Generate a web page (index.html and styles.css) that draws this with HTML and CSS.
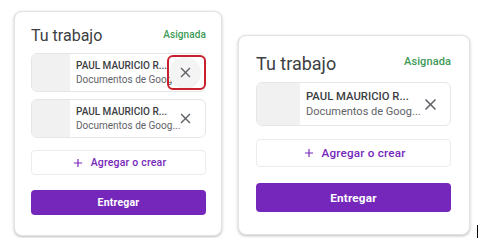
FILE: index.html
```html
<!DOCTYPE html>
<html lang="es">
<head>
<meta charset="utf-8">
<title>Tu trabajo</title>
<link rel="stylesheet" href="styles.css">
</head>
<body>
<div class="page">
  <section class="card card--sm">
    <div class="card__head">
      <h2 class="card__title">Tu trabajo</h2>
      <span class="card__status">Asignada</span>
    </div>
    <div class="att">
      <div class="att__thumb"></div>
      <div class="att__text">
        <div class="att__name">PAUL MAURICIO R...</div>
        <div class="att__type">Documentos de Goog...</div>
      </div>
      <div class="att__remove att__remove--hover">
        <svg class="att__x" viewBox="0 0 24 24"><path d="M19 6.41 17.59 5 12 10.59 6.41 5 5 6.41 10.59 12 5 17.59 6.41 19 12 13.41 17.59 19 19 17.59 13.41 12z"/></svg>
        <span class="highlight"></span>
      </div>
    </div>
    <div class="att">
      <div class="att__thumb"></div>
      <div class="att__text">
        <div class="att__name">PAUL MAURICIO R...</div>
        <div class="att__type">Documentos de Goog...</div>
      </div>
      <div class="att__remove">
        <svg class="att__x" viewBox="0 0 24 24"><path d="M19 6.41 17.59 5 12 10.59 6.41 5 5 6.41 10.59 12 5 17.59 6.41 19 12 13.41 17.59 19 19 17.59 13.41 12z"/></svg>
      </div>
    </div>
    <button class="btn-add"><svg class="btn-add__plus" viewBox="0 0 24 24"><path d="M19 13h-6v6h-2v-6H5v-2h6V5h2v6h6v2z"/></svg>Agregar o crear</button>
    <button class="btn-submit">Entregar</button>
  </section>

  <section class="card card--lg">
    <div class="card__head">
      <h2 class="card__title">Tu trabajo</h2>
      <span class="card__status">Asignada</span>
    </div>
    <div class="att">
      <div class="att__thumb"></div>
      <div class="att__text">
        <div class="att__name">PAUL MAURICIO R...</div>
        <div class="att__type">Documentos de Goog...</div>
      </div>
      <div class="att__remove">
        <svg class="att__x" viewBox="0 0 24 24"><path d="M19 6.41 17.59 5 12 10.59 6.41 5 5 6.41 10.59 12 5 17.59 6.41 19 12 13.41 17.59 19 19 17.59 13.41 12z"/></svg>
      </div>
    </div>
    <button class="btn-add"><svg class="btn-add__plus" viewBox="0 0 24 24"><path d="M19 13h-6v6h-2v-6H5v-2h6V5h2v6h6v2z"/></svg>Agregar o crear</button>
    <button class="btn-submit">Entregar</button>
  </section>

  <div class="cursor"></div>
</div>
</body>
</html>
```

FILE: styles.css
```css
* { box-sizing: border-box; }

html, body {
  margin: 0;
  background: #ffffff;
  font-family: Roboto, "Noto Sans", Arial, sans-serif;
  color: #3c4043;
}

.page {
  display: flex;
  align-items: flex-start;
  gap: 16px;
  padding: 11px 0 0 14px;
}

.card {
  display: flex;
  flex-direction: column;
  background: #fff;
  border: 1px solid #e3e3e3;
  border-radius: 8px;
  box-shadow: 0 1px 2px rgba(60, 64, 67, 0.2), 0 1px 3px 1px rgba(60, 64, 67, 0.1);
}

.card--sm {
  --title: 16px;
  --title-lh: 20px;
  --status: 10px;
  --item-h: 39px;
  --name: 10px;
  --type: 10px;
  --line: 14px;
  --x: 17px;
  --btn-h: 25px;
  --btn-font: 10.5px;
  width: 208px;
  padding: 14px 15px 20px 16px;
}

.card--lg {
  --title: 18px;
  --title-lh: 22px;
  --status: 11px;
  --item-h: 44px;
  --name: 11.3px;
  --type: 11px;
  --line: 15px;
  --x: 19px;
  --btn-h: 28px;
  --btn-font: 11.7px;
  width: 232px;
  margin-top: 24px;
  padding: 17px 18px 22px 17px;
}

.card__head {
  display: flex;
  justify-content: space-between;
  align-items: flex-start;
  margin-bottom: 7px;
}

.card__title {
  margin: 0;
  font-size: var(--title);
  line-height: var(--title-lh);
  font-weight: 400;
  color: #3c4043;
}

.card__status {
  font-size: var(--status);
  line-height: 14px;
  font-weight: 500;
  letter-spacing: 0.1px;
  color: #34a853;
  margin-top: 2px;
}

.card--sm .card__status { color: #3d9a55; }
.card--lg .card__status { color: #3d9a55; }

.att {
  display: flex;
  align-items: center;
  height: var(--item-h);
  border: 1px solid #e6e6e6;
  border-radius: 6px;
  margin-bottom: 7px;
}

.att__thumb {
  align-self: stretch;
  width: calc(var(--item-h) - 1px);
  background: #f1f1f1;
  border-radius: 5px 0 0 5px;
  flex: none;
}

.att__text {
  flex: 1;
  min-width: 0;
  padding-left: 6px;
  white-space: nowrap;
}

.att__name {
  font-size: var(--name);
  line-height: var(--line);
  font-weight: 500;
  color: #3c4043;
}

.att__type {
  font-size: var(--type);
  line-height: var(--line);
  color: #5f6368;
}

.att__remove {
  position: relative;
  flex: none;
  width: 32px;
  height: 32px;
  margin-right: 4px;
  border-radius: 50%;
  display: flex;
  align-items: center;
  justify-content: center;
}

.att__remove--hover {
  background: #f4f4f4;
}

.att__x {
  width: var(--x);
  height: var(--x);
  fill: #5f6368;
}

.highlight {
  position: absolute;
  left: -2px;
  right: -5px;
  top: -2px;
  bottom: -1px;
  border: 2px solid #c8202c;
  border-radius: 6px;
}

.btn-add {
  display: flex;
  align-items: center;
  justify-content: center;
  height: var(--btn-h);
  margin-top: 5px;
  padding: 0;
  background: #fff;
  border: 1px solid #ececec;
  border-radius: 4px;
  font-family: inherit;
  font-size: var(--btn-font);
  font-weight: 500;
  letter-spacing: 0.2px;
  color: #7627bb;
}

.btn-add__plus {
  width: 14px;
  height: 14px;
  fill: #7627bb;
  margin-right: 6px;
}

.btn-submit {
  height: var(--btn-h);
  margin-top: 15px;
  padding: 0;
  background: #7627bb;
  border: none;
  border-radius: 4px;
  font-family: inherit;
  font-size: var(--btn-font);
  font-weight: 700;
  letter-spacing: 0.2px;
  color: #fff;
}

.card--lg .btn-add { margin-top: 6px; }
.card--lg .btn-submit { margin-top: 16px; height: 29px; }

.cursor {
  width: 1px;
  height: 13px;
  background: #000;
  margin-top: 214px;
  margin-left: -9px;
}
```
